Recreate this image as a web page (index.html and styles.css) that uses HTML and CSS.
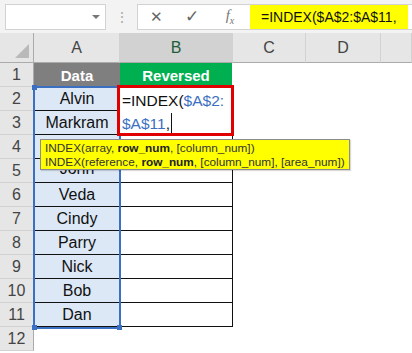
FILE: index.html
```html
<html>

<head>
<meta charset="utf-8">
<link rel="stylesheet" href="styles.css">
</head>

<body>
	<div class="bar">
		<div class="namebox"><span class="arrow"></span></div>
		<div class="dots">&#8942;</div>
		<div class="fbox">
			<span class="fbtn x">&#10005;</span>
			<span class="fbtn ok">&#10003;</span>
			<span class="fbtn fx">f<sub>x</sub></span>
			<span class="ftext">=INDEX($A$2:$A$11,</span>
		</div>
	</div>
	<div class="sheet">
		<div class="row head">
			<div class="rh corner"><span class="tri"></span></div>
			<div class="ch a">A</div>
			<div class="ch b sel">B</div>
			<div class="ch c">C</div>
			<div class="ch d">D</div>
			<div class="ch e"></div>
		</div>
		<div class="row">
			<div class="rh">1</div>
			<div class="cell a title gray">Data</div>
			<div class="cell b title green">Reversed</div>
			<div class="cell c"></div><div class="cell d"></div><div class="cell e"></div>
		</div>
		<div class="row">
			<div class="rh">2</div>
			<div class="cell a name">Alvin</div>
			<div class="cell b box"></div>
			<div class="cell c"></div><div class="cell d"></div><div class="cell e"></div>
		</div>
		<div class="row">
			<div class="rh">3</div>
			<div class="cell a name">Markram</div>
			<div class="cell b box"></div>
			<div class="cell c"></div><div class="cell d"></div><div class="cell e"></div>
		</div>
		<div class="row">
			<div class="rh">4</div>
			<div class="cell a name"></div>
			<div class="cell b box"></div>
			<div class="cell c"></div><div class="cell d"></div><div class="cell e"></div>
		</div>
		<div class="row">
			<div class="rh">5</div>
			<div class="cell a name john">John</div>
			<div class="cell b box"></div>
			<div class="cell c"></div><div class="cell d"></div><div class="cell e"></div>
		</div>
		<div class="row">
			<div class="rh">6</div>
			<div class="cell a name">Veda</div>
			<div class="cell b box"></div>
			<div class="cell c"></div><div class="cell d"></div><div class="cell e"></div>
		</div>
		<div class="row">
			<div class="rh">7</div>
			<div class="cell a name">Cindy</div>
			<div class="cell b box"></div>
			<div class="cell c"></div><div class="cell d"></div><div class="cell e"></div>
		</div>
		<div class="row">
			<div class="rh">8</div>
			<div class="cell a name">Parry</div>
			<div class="cell b box"></div>
			<div class="cell c"></div><div class="cell d"></div><div class="cell e"></div>
		</div>
		<div class="row">
			<div class="rh">9</div>
			<div class="cell a name">Nick</div>
			<div class="cell b box"></div>
			<div class="cell c"></div><div class="cell d"></div><div class="cell e"></div>
		</div>
		<div class="row">
			<div class="rh">10</div>
			<div class="cell a name">Bob</div>
			<div class="cell b box"></div>
			<div class="cell c"></div><div class="cell d"></div><div class="cell e"></div>
		</div>
		<div class="row">
			<div class="rh">11</div>
			<div class="cell a name">Dan</div>
			<div class="cell b box"></div>
			<div class="cell c"></div><div class="cell d"></div><div class="cell e"></div>
		</div>
		<div class="row">
			<div class="rh">12</div>
			<div class="cell a"></div>
			<div class="cell b"></div>
			<div class="cell c"></div><div class="cell d"></div><div class="cell e"></div>
		</div>

		<div class="range">
			<span class="handle tl"></span>
			<span class="handle bl"></span>
			<span class="handle br"></span>
		</div>
		<div class="edit">
			<div>=INDEX(<span class="ref">$A$2:</span></div>
			<div><span class="ref">$A$11</span>,<span class="caret"></span></div>
		</div>
		<div class="tip">
			<div>INDEX(array, <b>row_num</b>, [column_num])</div>
			<div>INDEX(reference, <b>row_num</b>, [column_num], [area_num])</div>
		</div>
	</div>
</body>

</html>
```

FILE: styles.css
```css
body {
	margin: 0;
	background-color: #fff;
	font-family: "Liberation Sans", Arial, sans-serif;
	overflow: hidden;
}

.bar {
	display: flex;
	align-items: center;
	height: 33px;
	padding: 0 0 0 5px;
	background-color: #f3f3f3;
	box-sizing: border-box;
}

.namebox {
	position: relative;
	flex-shrink: 0;
	width: 101px;
	height: 26px;
	background-color: #fff;
	border: 1px solid #d2d2d2;
	box-sizing: border-box;
}

.arrow {
	position: absolute;
	right: 5px;
	top: 10px;
	border-left: 4px solid transparent;
	border-right: 4px solid transparent;
	border-top: 4px solid #777;
}

.dots {
	flex-shrink: 0;
	width: 31px;
	text-align: center;
	color: #aaa;
	font-size: 14px;
}

.fbox {
	flex: 1;
	display: flex;
	align-items: center;
	height: 26px;
	background-color: #fff;
	border: 1px solid #d2d2d2;
	border-right: none;
	box-sizing: border-box;
	overflow: hidden;
}

.fbtn {
	flex-shrink: 0;
	color: #666;
	text-align: center;
}

.x {
	width: 36px;
	font-size: 15px;
}

.ok {
	width: 36px;
	font-size: 17px;
}

.fx {
	width: 40px;
	font-family: "Liberation Serif", serif;
	font-style: italic;
	font-size: 15px;
	color: #777;
}

.fx sub {
	font-size: 10px;
}

.ftext {
	flex-shrink: 0;
	height: 24px;
	line-height: 24px;
	padding: 0 11px;
	background-color: #ffff00;
	font-size: 14px;
	color: #111;
	white-space: nowrap;
}

.sheet {
	position: relative;
}

.row {
	display: flex;
	height: 24px;
}

.head {
	height: 30px;
}

.rh,
.ch {
	flex-shrink: 0;
	background-color: #e6e6e6;
	color: #444;
	font-size: 16px;
	text-align: center;
	box-sizing: border-box;
	display: flex;
	align-items: center;
	justify-content: center;
}

.rh {
	width: 34px;
	border-right: 1px solid #ababab;
	border-bottom: 1px solid #d2d2d2;
}

.ch {
	border-right: 1px solid #d2d2d2;
	border-bottom: 1px solid #ababab;
}

.ch.sel {
	background-color: #d2d2d2;
	color: #1f5c3c;
}

.corner {
	position: relative;
	border-bottom: 1px solid #ababab;
}

.tri {
	position: absolute;
	right: 4px;
	bottom: 4px;
	border-left: 14px solid transparent;
	border-bottom: 14px solid #b9b9b9;
}

.a {
	width: 86px;
	flex-shrink: 0;
}

.b {
	width: 113px;
	flex-shrink: 0;
}

.c {
	width: 73px;
	flex-shrink: 0;
}

.d {
	width: 75px;
	flex-shrink: 0;
}

.e {
	flex: 1;
}

.cell {
	box-sizing: border-box;
	display: flex;
	align-items: center;
	justify-content: center;
	font-size: 16px;
	color: #111;
}

.title {
	color: #fff;
	font-weight: bold;
	font-size: 15px;
}

.gray {
	background-color: #7f7f7f;
}

.green {
	background-color: #00b050;
	border-right: 1px solid #fff;
}

.name {
	background-color: #dde8f6;
	border-bottom: 1px solid #111;
}

.john {
	padding-bottom: 4px;
}

.box {
	border-bottom: 1px solid #111;
	border-right: 1px solid #111;
}

.range {
	position: absolute;
	left: 33px;
	top: 53px;
	width: 88px;
	height: 243px;
	border: 2px solid #3b6fc2;
	box-sizing: border-box;
}

.handle {
	position: absolute;
	width: 5px;
	height: 5px;
	background-color: #3b6fc2;
}

.tl {
	left: -3px;
	top: -3px;
}

.bl {
	left: -3px;
	bottom: -3px;
}

.br {
	right: -3px;
	bottom: -3px;
}

.edit {
	position: absolute;
	left: 117px;
	top: 52px;
	width: 117px;
	height: 51px;
	border: 3px solid #e00000;
	box-sizing: border-box;
	background-color: #fff;
	padding: 1px 0 0 2px;
	font-size: 15.5px;
	line-height: 23px;
	color: #111;
	white-space: nowrap;
}

.ref {
	color: #3b6fc2;
}

.caret {
	display: inline-block;
	width: 1px;
	height: 20px;
	margin-left: 1px;
	vertical-align: -4px;
	background-color: #111;
}

.tip {
	position: absolute;
	left: 40px;
	top: 106px;
	width: 310px;
	height: 31px;
	padding: 1px 0 0 4px;
	box-sizing: border-box;
	background-color: #ffff00;
	border: 1px solid #8c8c8c;
	box-shadow: 1px 1px 1px rgba(0, 0, 0, 0.15);
	font-size: 11.8px;
	line-height: 14px;
	color: #333;
	white-space: nowrap;
}

.tip b {
	color: #222;
}
```
